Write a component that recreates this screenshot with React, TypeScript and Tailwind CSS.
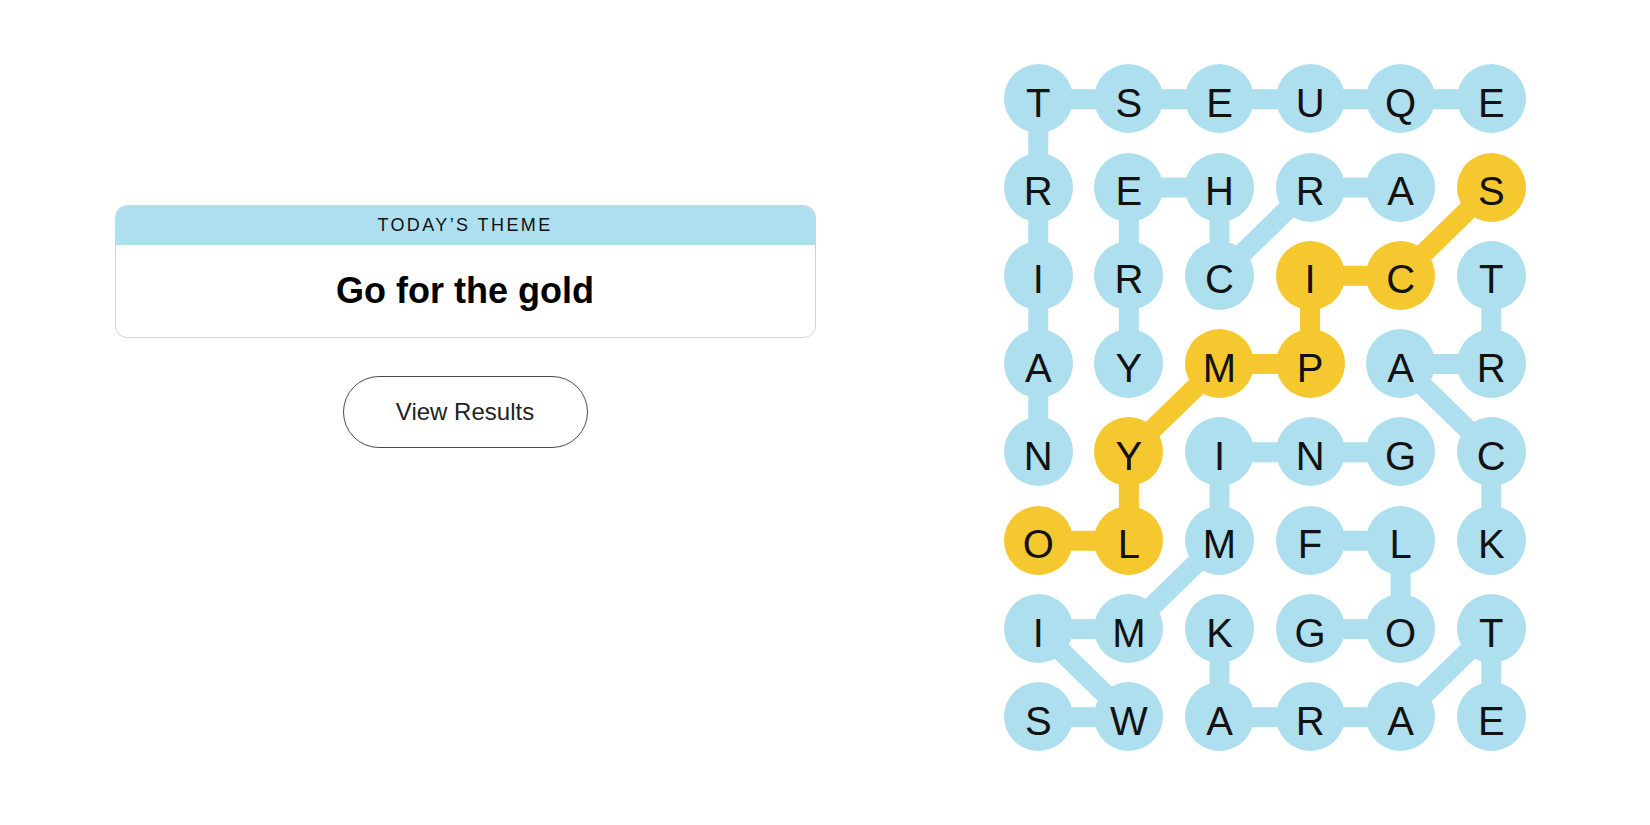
import type {FC} from "react";

const ROWS = [
    "TSEUQE",
    "REHRAS",
    "IRCICT",
    "AYMPAR",
    "NYINGC",
    "OLMFLK",
    "IMKGOT",
    "SWARAE",
];

// cells of the spangram
const GOLD = new Set(["5,0", "5,1", "4,1", "3,2", "3,3", "2,3", "2,4", "1,5"]);

// word paths, as [row, col] steps
const BLUE_PATHS: number[][][] = [
    [[0, 5], [0, 4], [0, 3], [0, 2], [0, 1], [0, 0], [1, 0], [2, 0], [3, 0], [4, 0]],
    [[1, 4], [1, 3], [2, 2], [1, 2], [1, 1], [2, 1], [3, 1]],
    [[2, 5], [3, 5], [3, 4], [4, 5], [5, 5]],
    [[7, 0], [7, 1], [6, 0], [6, 1], [5, 2], [4, 2], [4, 3], [4, 4]],
    [[6, 3], [6, 4], [5, 4], [5, 3]],
    [[6, 2], [7, 2], [7, 3], [7, 4], [6, 5], [7, 5]],
];
const GOLD_PATH = [[5, 0], [5, 1], [4, 1], [3, 2], [3, 3], [2, 3], [2, 4], [1, 5]];

const CW = 90.6;
const CH = 88.3;
const cx = (c: number) => CW / 2 + CW * c;
const cy = (r: number) => CH / 2 + CH * r;

const Path: FC<{steps: number[][]; color: string}> = ({steps, color}) => (
    <polyline
        points={steps.map(([r, c]) => `${cx(c)},${cy(r)}`).join(" ")}
        fill="none"
        stroke={color}
        strokeWidth={20}
        strokeLinejoin="round"
    />
);

const Board: FC = () => (
    <div className="relative w-[543.6px] h-[706.4px]">
        <svg className="absolute inset-0" width={543.6} height={706.4} viewBox="0 0 543.6 706.4">
            {BLUE_PATHS.map((p, i) => <Path key={i} steps={p} color="#aedfee"/>)}
            <Path steps={GOLD_PATH} color="#f6c830"/>
        </svg>
        <div className="relative grid grid-cols-[repeat(6,90.6px)] grid-rows-[repeat(8,88.3px)]">
            {ROWS.map((row, r) => row.split("").map((ch, c) => (
                <div key={`${r}-${c}`} className="flex items-center justify-center">
                    <div className={`flex items-center justify-center w-[69px] h-[69px] rounded-full pt-2 text-[40px] leading-none text-[#121212] ${GOLD.has(`${r},${c}`) ? "bg-[#f6c830]" : "bg-[#aedfee]"}`}>
                        {ch}
                    </div>
                </div>
            )))}
        </div>
    </div>
);

export default function App() {
    return <div className="flex w-full h-[825px] bg-white font-['Liberation_Sans',Arial,sans-serif]">
        <div className="flex flex-col items-center w-[930px] pt-[205px]">
            <div className="w-[701px] rounded-xl border border-[#d3d3d3] overflow-hidden">
                <div className="h-[39px] bg-[#aedfee] flex items-center justify-center text-[18px] tracking-[2.4px] text-[#121212]">
                    TODAY’S THEME
                </div>
                <div className="h-[92px] flex items-center justify-center text-[36px] font-bold text-black">
                    Go for the gold
                </div>
            </div>
            <button className="mt-[38px] w-[245px] h-[72px] rounded-full border border-[#4a4a4a] text-[24px] text-[#222] bg-white">
                View Results
            </button>
        </div>
        <div className="ml-[63px] pt-[54.6px]">
            <Board/>
        </div>
    </div>;
}
